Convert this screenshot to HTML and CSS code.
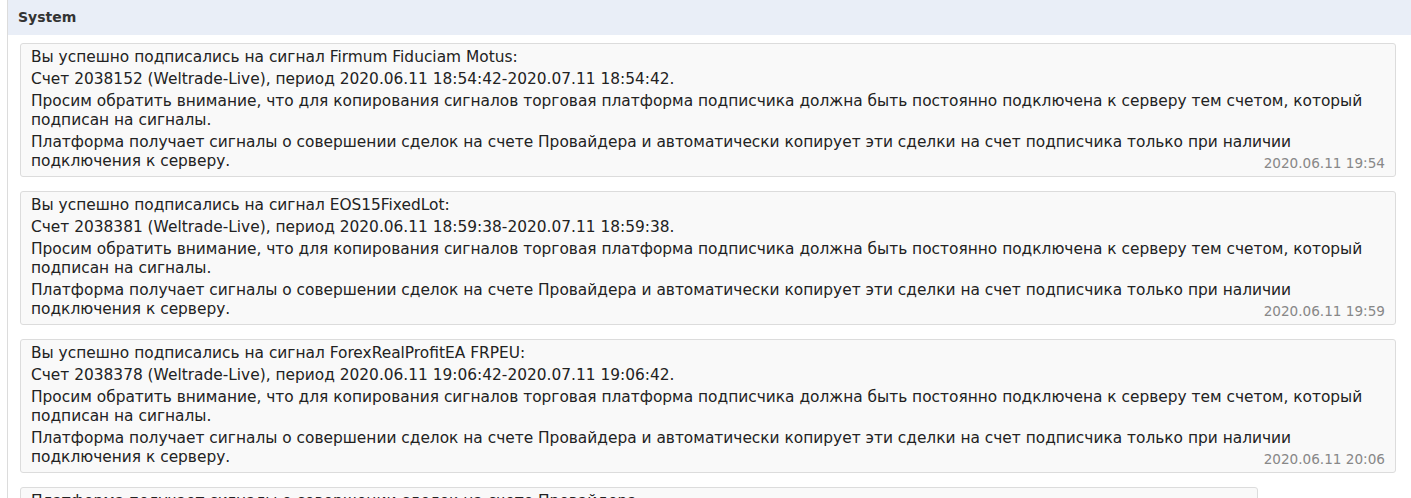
FILE: index.html
```html
<!DOCTYPE html>
<html lang="ru">
<head>
<meta charset="utf-8">
<link rel="stylesheet" href="styles.css">
</head>
<body>
<div class="panel">
  <div class="panel-head">System</div>
  <div class="list">
    <div class="msg">
      <p>Вы успешно подписались на сигнал Firmum Fiduciam Motus:</p>
      <p>Счет 2038152 (Weltrade-Live), период 2020.06.11 18:54:42-2020.07.11 18:54:42.</p>
      <p>Просим обратить внимание, что для копирования сигналов торговая платформа подписчика должна быть постоянно подключена к серверу тем счетом, который подписан на сигналы.</p>
      <p>Платформа получает сигналы о совершении сделок на счете Провайдера и автоматически копирует эти сделки на счет подписчика только при наличии подключения к серверу.</p>
      <div class="time">2020.06.11 19:54</div>
    </div>
    <div class="msg">
      <p>Вы успешно подписались на сигнал EOS15FixedLot:</p>
      <p>Счет 2038381 (Weltrade-Live), период 2020.06.11 18:59:38-2020.07.11 18:59:38.</p>
      <p>Просим обратить внимание, что для копирования сигналов торговая платформа подписчика должна быть постоянно подключена к серверу тем счетом, который подписан на сигналы.</p>
      <p>Платформа получает сигналы о совершении сделок на счете Провайдера и автоматически копирует эти сделки на счет подписчика только при наличии подключения к серверу.</p>
      <div class="time">2020.06.11 19:59</div>
    </div>
    <div class="msg">
      <p>Вы успешно подписались на сигнал ForexRealProfitEA FRPEU:</p>
      <p>Счет 2038378 (Weltrade-Live), период 2020.06.11 19:06:42-2020.07.11 19:06:42.</p>
      <p>Просим обратить внимание, что для копирования сигналов торговая платформа подписчика должна быть постоянно подключена к серверу тем счетом, который подписан на сигналы.</p>
      <p>Платформа получает сигналы о совершении сделок на счете Провайдера и автоматически копирует эти сделки на счет подписчика только при наличии подключения к серверу.</p>
      <div class="time">2020.06.11 20:06</div>
    </div>
    <div class="msg msg-short">
      <p>Платформа получает сигналы о совершении сделок на счете Провайдера.</p>
    </div>
  </div>
</div>
</body>
</html>
```
FILE: styles.css
```css
html, body {
  margin: 0;
  padding: 0;
  background: #fff;
}
body {
  font-family: "DejaVu Sans", Verdana, sans-serif;
  font-size: 15.4px;
  color: #222;
  padding-left: 7px;
  height: 498px;
  overflow: hidden;
}
.panel {
  border-left: 1px solid #dcdcdc;
  min-height: 498px;
}
.panel-head {
  background: #e9eef7;
  height: 35px;
  line-height: 35px;
  padding-left: 10px;
  font-weight: bold;
  font-size: 14px;
  color: #333;
}
.list {
  display: flex;
  flex-direction: column;
  align-items: flex-start;
  gap: 14px;
  padding: 8px 15px 0 12px;
}
.msg {
  align-self: stretch;
  background: #f9f9f9;
  border: 1px solid #dcdcdc;
  border-radius: 3px;
  padding: 4px 10px 5px 10px;
}
.msg-short {
  align-self: flex-start;
  width: 1216px;
}
.msg p {
  margin: 0 0 3px 0;
  line-height: 19px;
}
.msg p:last-of-type {
  margin-bottom: 0;
}
.time {
  text-align: right;
  color: #888;
  font-size: 13.6px;
  line-height: 16px;
  margin-top: -16px;
}
```
